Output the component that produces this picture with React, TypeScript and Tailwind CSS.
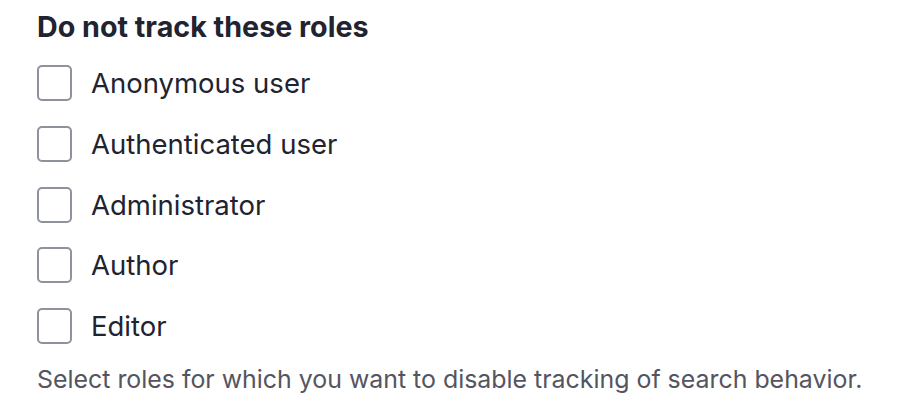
export default function App() {
  const roles = ["Anonymous user", "Authenticated user", "Administrator", "Author", "Editor"];
  return (
    <div className="w-[917px] h-[414px] bg-white pl-[37px] pt-[9px] font-['Inter',sans-serif] text-[#222330]">
      <div className="text-[28.7px] font-bold leading-[36px]">Do not track these roles</div>
      <div className="mt-[20px] flex flex-col gap-[24.75px]">
        {roles.map((r) => (
          <label key={r} className="flex items-center h-[36px]">
            <span className="w-[35px] h-[36px] border-2 border-[#8e929c] rounded-[5px] bg-white shrink-0" />
            <span className="ml-[19px] text-[27.5px] leading-[36px]">{r}</span>
          </label>
        ))}
      </div>
      <div className="mt-[19px] text-[24.9px] leading-[32px] text-[#545560]">
        Select roles for which you want to disable tracking of search behavior.
      </div>
    </div>
  );
}
